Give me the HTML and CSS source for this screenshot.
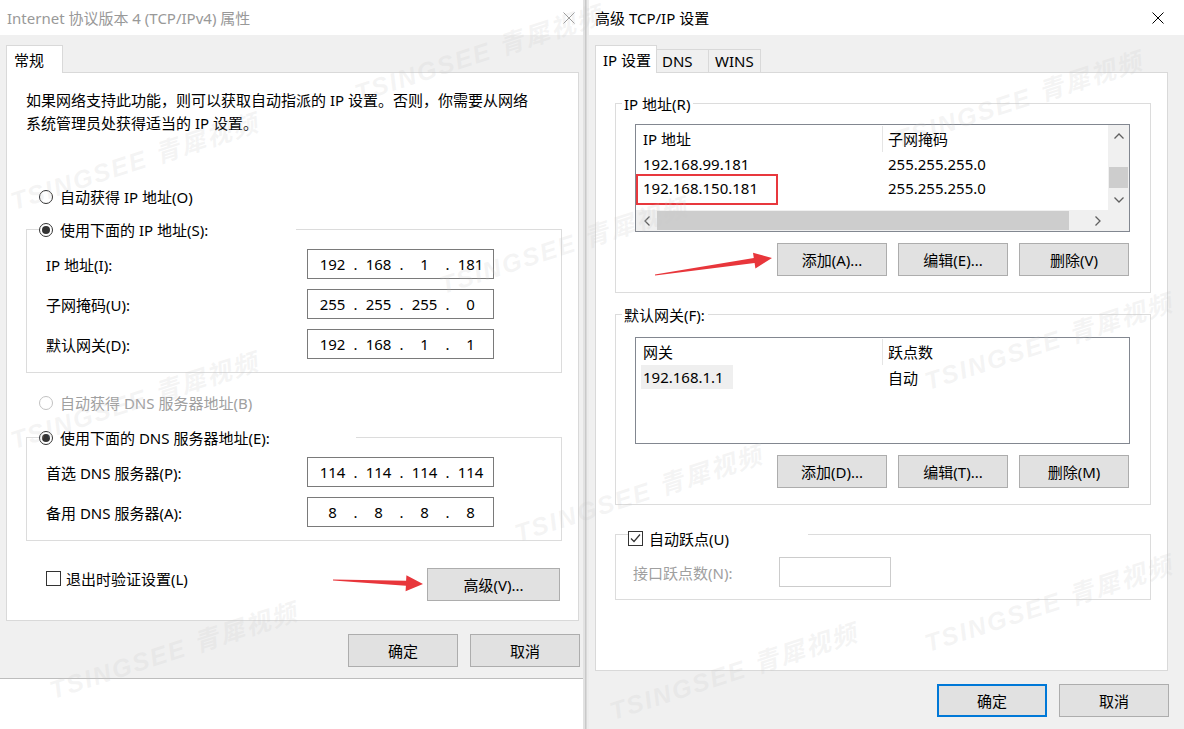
FILE: index.html
```html
<!DOCTYPE html>
<html lang="zh-CN">
<head>
<meta charset="utf-8">
<title>TCP/IP 设置</title>
<link rel="stylesheet" href="styles.css">
</head>
<body>
<div class="desk">
  <section class="win win-left">
    <header class="titlebar">
      <span class="title">Internet 协议版本 4 (TCP/IPv4) 属性</span>
      <svg class="close" width="12" height="12" viewBox="0 0 12 12"><path d="M0.5 0.5L11.5 11.5M11.5 0.5L0.5 11.5"/></svg>
    </header>
    <div class="winbody wb-left">
      <div class="tabs"><div class="tab sel t-gen">常规</div></div>
      <div class="panel panel-left">
        <p class="intro">如果网络支持此功能，则可以获取自动指派的 IP 设置。否则，你需要从网络<br>系统管理员处获得适当的 IP 设置。</p>
        <div class="opt opt-first"><span class="radio"></span>自动获得 IP 地址(O)</div>
        <div class="group g1">
          <div class="ghead"><span class="glabel w-ip"><span class="radio on"></span>使用下面的 IP 地址(S):</span></div>
          <div class="frow"><span class="flabel">IP 地址(I):</span><div class="ipbox"><span>192</span><i>.</i><span>168</span><i>.</i><span>1</span><i>.</i><span>181</span></div></div>
          <div class="frow"><span class="flabel">子网掩码(U):</span><div class="ipbox"><span>255</span><i>.</i><span>255</span><i>.</i><span>255</span><i>.</i><span>0</span></div></div>
          <div class="frow"><span class="flabel">默认网关(D):</span><div class="ipbox"><span>192</span><i>.</i><span>168</span><i>.</i><span>1</span><i>.</i><span>1</span></div></div>
        </div>
        <div class="opt opt-dis"><span class="radio"></span>自动获得 DNS 服务器地址(B)</div>
        <div class="group g2">
          <div class="ghead"><span class="glabel w-dns"><span class="radio on"></span>使用下面的 DNS 服务器地址(E):</span></div>
          <div class="frow"><span class="flabel">首选 DNS 服务器(P):</span><div class="ipbox"><span>114</span><i>.</i><span>114</span><i>.</i><span>114</span><i>.</i><span>114</span></div></div>
          <div class="frow"><span class="flabel">备用 DNS 服务器(A):</span><div class="ipbox"><span>8</span><i>.</i><span>8</span><i>.</i><span>8</span><i>.</i><span>8</span></div></div>
        </div>
        <div class="bottomrow">
          <div class="chkrow"><span class="chk"></span>退出时验证设置(L)</div>
          <div class="btn btn-adv">高级(V)...</div>
        </div>
      </div>
      <div class="footer ft-left">
        <div class="btn">确定</div>
        <div class="btn">取消</div>
      </div>
    </div>
  </section>

  <div class="edge"></div>

  <section class="win win-right">
    <header class="titlebar">
      <span class="title">高级 TCP/IP 设置</span>
      <svg class="close" width="12" height="12" viewBox="0 0 12 12"><path d="M0.5 0.5L11.5 11.5M11.5 0.5L0.5 11.5"/></svg>
    </header>
    <div class="winbody wb-right">
      <div class="tabs">
        <div class="tab sel t-ip">IP 设置</div>
        <div class="tab t-dns">DNS</div>
        <div class="tab t-wins">WINS</div>
      </div>
      <div class="panel panel-right">
        <div class="group gA">
          <div class="ghead ghead-s"><span class="glabel gl-pad">IP 地址(R)</span></div>
          <div class="lv lv-a">
            <div class="lv-content">
              <div class="lv-head"><span class="c1">IP 地址</span><span class="c2">子网掩码</span></div>
              <div class="lv-row"><span class="c1">192.168.99.181</span><span class="c2">255.255.255.0</span></div>
              <div class="lv-row"><span class="c1">192.168.150.181</span><span class="c2">255.255.255.0</span></div>
            </div>
            <div class="vs">
              <div class="sbtn"><svg width="10" height="6" viewBox="0 0 10 6"><path d="M0.5 5.5L5 1L9.5 5.5"/></svg></div>
              <div class="track"><div class="thumb"></div></div>
              <div class="sbtn"><svg width="10" height="6" viewBox="0 0 10 6"><path d="M0.5 0.5L5 5L9.5 0.5"/></svg></div>
            </div>
            <div class="hs">
              <div class="sbtn"><svg width="6" height="10" viewBox="0 0 6 10"><path d="M5.5 0.5L1 5L5.5 9.5"/></svg></div>
              <div class="track"><div class="thumb"></div></div>
              <div class="sbtn"><svg width="6" height="10" viewBox="0 0 6 10"><path d="M0.5 0.5L5 5L0.5 9.5"/></svg></div>
            </div>
            <div class="corner"></div>
            <div class="mark"></div>
          </div>
          <div class="btnrow">
            <div class="btn">添加(A)...</div>
            <div class="btn">编辑(E)...</div>
            <div class="btn">删除(V)</div>
          </div>
        </div>

        <div class="group gB">
          <div class="ghead ghead-s"><span class="glabel gl-pad">默认网关(F):</span></div>
          <div class="lv lv-b">
            <div class="lv-head"><span class="c1">网关</span><span class="c2">跃点数</span></div>
            <div class="lv-row"><span class="c1 c1-hl"><span class="hl">192.168.1.1</span></span><span class="c2">自动</span></div>
          </div>
          <div class="btnrow btnrow-b">
            <div class="btn">添加(D)...</div>
            <div class="btn">编辑(T)...</div>
            <div class="btn">删除(M)</div>
          </div>
        </div>

        <div class="group gC">
          <div class="ghead"><span class="glabel w-auto"><span class="chk on"><svg width="13" height="13" viewBox="0 0 13 13"><path d="M2 6.5L5 9.5L11 2.5"/></svg></span>自动跃点(U)</span></div>
          <div class="frow2"><span class="flabel2">接口跃点数(N):</span><div class="tb-dis"></div></div>
        </div>
      </div>
      <div class="footer ft-right">
        <div class="btn btn-def">确定</div>
        <div class="btn">取消</div>
      </div>
    </div>
  </section>
</div>

<div class="wm wm1">TSINGSEE 青犀视频</div>
<div class="wm wm2">TSINGSEE 青犀视频</div>
<div class="wm wm3">TSINGSEE 青犀视频</div>
<div class="wm wm4">TSINGSEE 青犀视频</div>
<div class="wm wm5">TSINGSEE 青犀视频</div>
<div class="wm wm6">TSINGSEE 青犀视频</div>
<div class="wm wm7">TSINGSEE 青犀视频</div>
<div class="wm wm8">TSINGSEE 青犀视频</div>
<div class="wm wm9">TSINGSEE 青犀视频</div>
<div class="wm wm10">TSINGSEE 青犀视频</div>

<svg class="arrows" width="1184" height="729" viewBox="0 0 1184 729">
  <polygon points="654.9,274.5 753.8,258.1 753,252.7 772,258 755.4,268.5 754.6,263.1 655.1,275.5"/>
  <polygon points="333,579.5 406.1,580.8 406.4,575.3 423,584 405.6,591.2 405.9,585.7 333,580.5"/>
</svg>
</body>
</html>
```

FILE: styles.css
```css
* { box-sizing: border-box; }
html, body { margin: 0; padding: 0; }
body {
  width: 1184px;
  height: 729px;
  overflow: hidden;
  position: relative;
  background: #fff;
  font-family: "Noto Sans", "Noto Sans CJK SC", sans-serif;
  font-size: 15px;
  color: #000;
}

.desk { display: flex; align-items: flex-start; height: 729px; }

.win { display: flex; flex-direction: column; background: #f0f0f0; flex: none; }
.win-left { width: 583px; height: 679px; border-bottom: 1px solid #bdbdbd; }
.win-right { width: 595px; height: 729px; }
.edge {
  width: 6px; height: 729px; flex: none;
  background: linear-gradient(90deg, #e2e2e2 0 2px, #c9c9c9 2px 3px, #d9d9d9 3px 4px, #ececec 4px 6px);
}

.titlebar {
  height: 35px; flex: none;
  background: #fff;
  display: flex; align-items: center; justify-content: space-between;
  white-space: nowrap;
}
.win-left .titlebar { padding: 0 8px 0 7px; color: #999; }
.win-right .titlebar { padding: 0 20px 0 6px; color: #000; }
.close path { stroke: currentColor; stroke-width: 1; fill: none; }

.winbody { flex: 1; display: flex; flex-direction: column; padding: 10px 0 0 6px; }

/* tabs */
.tabs { display: flex; align-items: flex-end; height: 27px; position: relative; z-index: 1; flex: none; }
.tab {
  height: 23px;
  border: 1px solid #d9d9d9; border-bottom: 0;
  background: #f0f0f0;
  display: flex; align-items: center;
  margin-left: -1px;
  white-space: nowrap;
}
.tab.sel { height: 28px; margin-bottom: -1px; margin-left: 0; background: #fff; }
.t-gen { width: 57px; padding-left: 7px; }
.t-ip { width: 62px; padding-left: 7px; }
.t-dns { width: 53px; padding-left: 5px; }
.t-wins { width: 53px; padding-left: 6px; }

.panel { width: 573px; background: #fff; border: 1px solid #d9d9d9; flex: none; padding-left: 19px; display: flex; flex-direction: column; }
.panel-left { height: 549px; }
.panel-right { height: 599px; }

.intro { margin: 16px 0 0; line-height: 23px; white-space: nowrap; }

/* radio & checkbox */
.radio {
  width: 14px; height: 14px; flex: none;
  border: 1px solid #333; border-radius: 50%;
  margin-right: 7px;
  display: flex; align-items: center; justify-content: center;
  background: #fff;
}
.radio.on::after { content: ""; width: 8px; height: 8px; border-radius: 50%; background: #333; }

.chk {
  width: 15px; height: 15px; flex: none;
  border: 1px solid #333; background: #fff;
  margin-right: 5px;
  display: flex; align-items: center; justify-content: center;
}
.chk.on { margin-right: 6px; }
.chk path { fill: none; stroke: #333; stroke-width: 1.2; }

.opt { display: flex; align-items: center; height: 23px; padding-left: 13px; white-space: nowrap; flex: none; }
.opt-first { margin-top: 50px; }
.opt-dis { margin-top: 18px; color: #a0a0a0; }
.opt-dis .radio { border-color: #c2c2c2; }

/* group boxes */
.group {
  --off: 11px;
  display: flex; flex-direction: column;
  width: 536px; flex: none;
  border: 1px solid #dcdcdc; border-top: 0;
  padding: 0 0 13px 19px;
}
.ghead {
  display: flex; align-items: flex-start;
  height: 23px; flex: none;
  margin: calc(-1 * var(--off)) -1px 0 -20px;
}
.ghead::before, .ghead::after {
  content: ""; height: 0;
  margin-top: var(--off);
  border-top: 1px solid #dcdcdc;
}
.ghead::before { width: 13px; flex: none; }
.ghead::after { flex: 1; }
.ghead-s::before { width: 7px; }
.glabel { display: flex; align-items: center; height: 23px; white-space: nowrap; flex: none; }
.gl-pad { padding: 0 3px 0 2px; }
.w-ip { width: 257px; }
.w-dns { width: 317px; }
.w-auto { width: 180px; }

.g1 { margin-top: 21px; }
.g2 { margin-top: 23px; }

.frow { display: flex; align-items: center; height: 30px; margin-top: 10px; flex: none; }
.ghead + .frow { margin-top: 8px; }
.flabel { width: 261px; white-space: nowrap; }

.ipbox {
  width: 187px; height: 30px;
  border: 1px solid #7a7a7a; background: #fff;
  display: flex; align-items: center;
  padding-left: 6px;
}
.ipbox span { width: 37px; text-align: center; }
.ipbox i { width: 9px; text-align: center; font-style: normal; }

.bottomrow {
  margin-top: 26px;
  width: 534px;
  padding-left: 20px;
  display: flex; justify-content: space-between; align-items: flex-start;
}
.chkrow { display: flex; align-items: center; height: 23px; white-space: nowrap; }

/* buttons */
.btn {
  width: 110px; height: 33px; flex: none;
  border: 1px solid #adadad; background: #e1e1e1;
  display: flex; align-items: center; justify-content: center;
  white-space: nowrap;
}
.btn-adv { width: 133px; margin-top: 1px; }
.btn-def { border: 2px solid #0078d7; }

.footer { display: flex; justify-content: flex-end; gap: 12px; margin-top: 13px; }
.ft-left { padding-right: 3px; }
.ft-right { padding-right: 15px; }

/* right panel groups */
.gA { margin-top: 30px; padding-bottom: 16px; }
.gB { margin-top: 21px; padding-bottom: 16px; }
.gC { --off: 7px; margin-top: 29px; padding: 0 0 12px 17px; }
.gC .ghead { margin-left: -18px; }

.lv { width: 495px; border: 1px solid #828790; background: #fff; position: relative; flex: none; }
.lv-a {
  height: 108px; margin-top: 9px;
  display: grid;
  grid-template-columns: 1fr 21px;
  grid-template-rows: 1fr 21px;
}
.lv-b { height: 107px; margin-top: 11px; }
.lv-content { grid-column: 1; grid-row: 1; overflow: hidden; }
.lv-head, .lv-row { display: flex; align-items: center; white-space: nowrap; }
.lv-head { height: 27px; }
.lv-row { height: 24px; }
.c1 { width: 247px; padding-left: 7px; flex: none; }
.lv-head .c1 { height: 26px; display: flex; align-items: center; border-right: 1px solid #e5e5e5; }
.c2 { padding-left: 5px; }
.c1-hl { padding-left: 5px; }
.hl { display: inline-block; width: 92px; height: 24px; line-height: 24px; padding-left: 2px; background: #efefef; }

.vs { grid-column: 2; grid-row: 1; background: #f0f0f0; display: flex; flex-direction: column; }
.hs { grid-column: 1; grid-row: 2; background: #f0f0f0; display: flex; }
.corner { grid-column: 2; grid-row: 2; background: #f0f0f0; }
.sbtn { width: 21px; height: 21px; flex: none; display: flex; align-items: center; justify-content: center; }
.sbtn path { fill: none; stroke: #606060; stroke-width: 1.3; }
.track { flex: 1; }
.vs .thumb { width: 19px; height: 21px; margin: 21px 1px 0; background: #cdcdcd; }
.hs .thumb { width: 412px; height: 19px; margin-top: 1px; background: #cdcdcd; }

.mark {
  position: absolute; left: 0; top: 49px;
  width: 142px; height: 31px;
  border: 2px solid #e8383d;
}

.btnrow { display: flex; justify-content: flex-end; gap: 11px; width: 494px; margin-top: 11px; flex: none; }

.frow2 { display: flex; align-items: center; height: 30px; margin-top: 7px; flex: none; }
.flabel2 { width: 146px; color: #a0a0a0; white-space: nowrap; }
.tb-dis { width: 112px; height: 30px; border: 1px solid #cccccc; background: #fff; }

/* watermarks */
.wm {
  position: absolute;
  height: 30px; line-height: 30px;
  font-family: "Liberation Sans", "Noto Sans CJK SC", sans-serif;
  font-size: 25px; font-weight: bold; font-style: italic;
  letter-spacing: 2px;
  color: rgba(200, 200, 200, 0.2);
  white-space: nowrap;
  transform-origin: 0 100%;
  transform: rotate(-18deg);
  pointer-events: none;
}
.wm1 { left: 360px; top: 78px; }
.wm2 { left: 16px; top: 186px; }
.wm3 { left: 445px; top: 270px; }
.wm4 { left: 900px; top: 124px; }
.wm5 { left: 16px; top: 425px; }
.wm6 { left: 520px; top: 518px; }
.wm7 { left: 930px; top: 366px; }
.wm8 { left: 55px; top: 675px; }
.wm9 { left: 615px; top: 696px; }
.wm10 { left: 930px; top: 628px; }

.arrows { position: absolute; left: 0; top: 0; pointer-events: none; }
.arrows polygon { fill: #e8363b; }
```
